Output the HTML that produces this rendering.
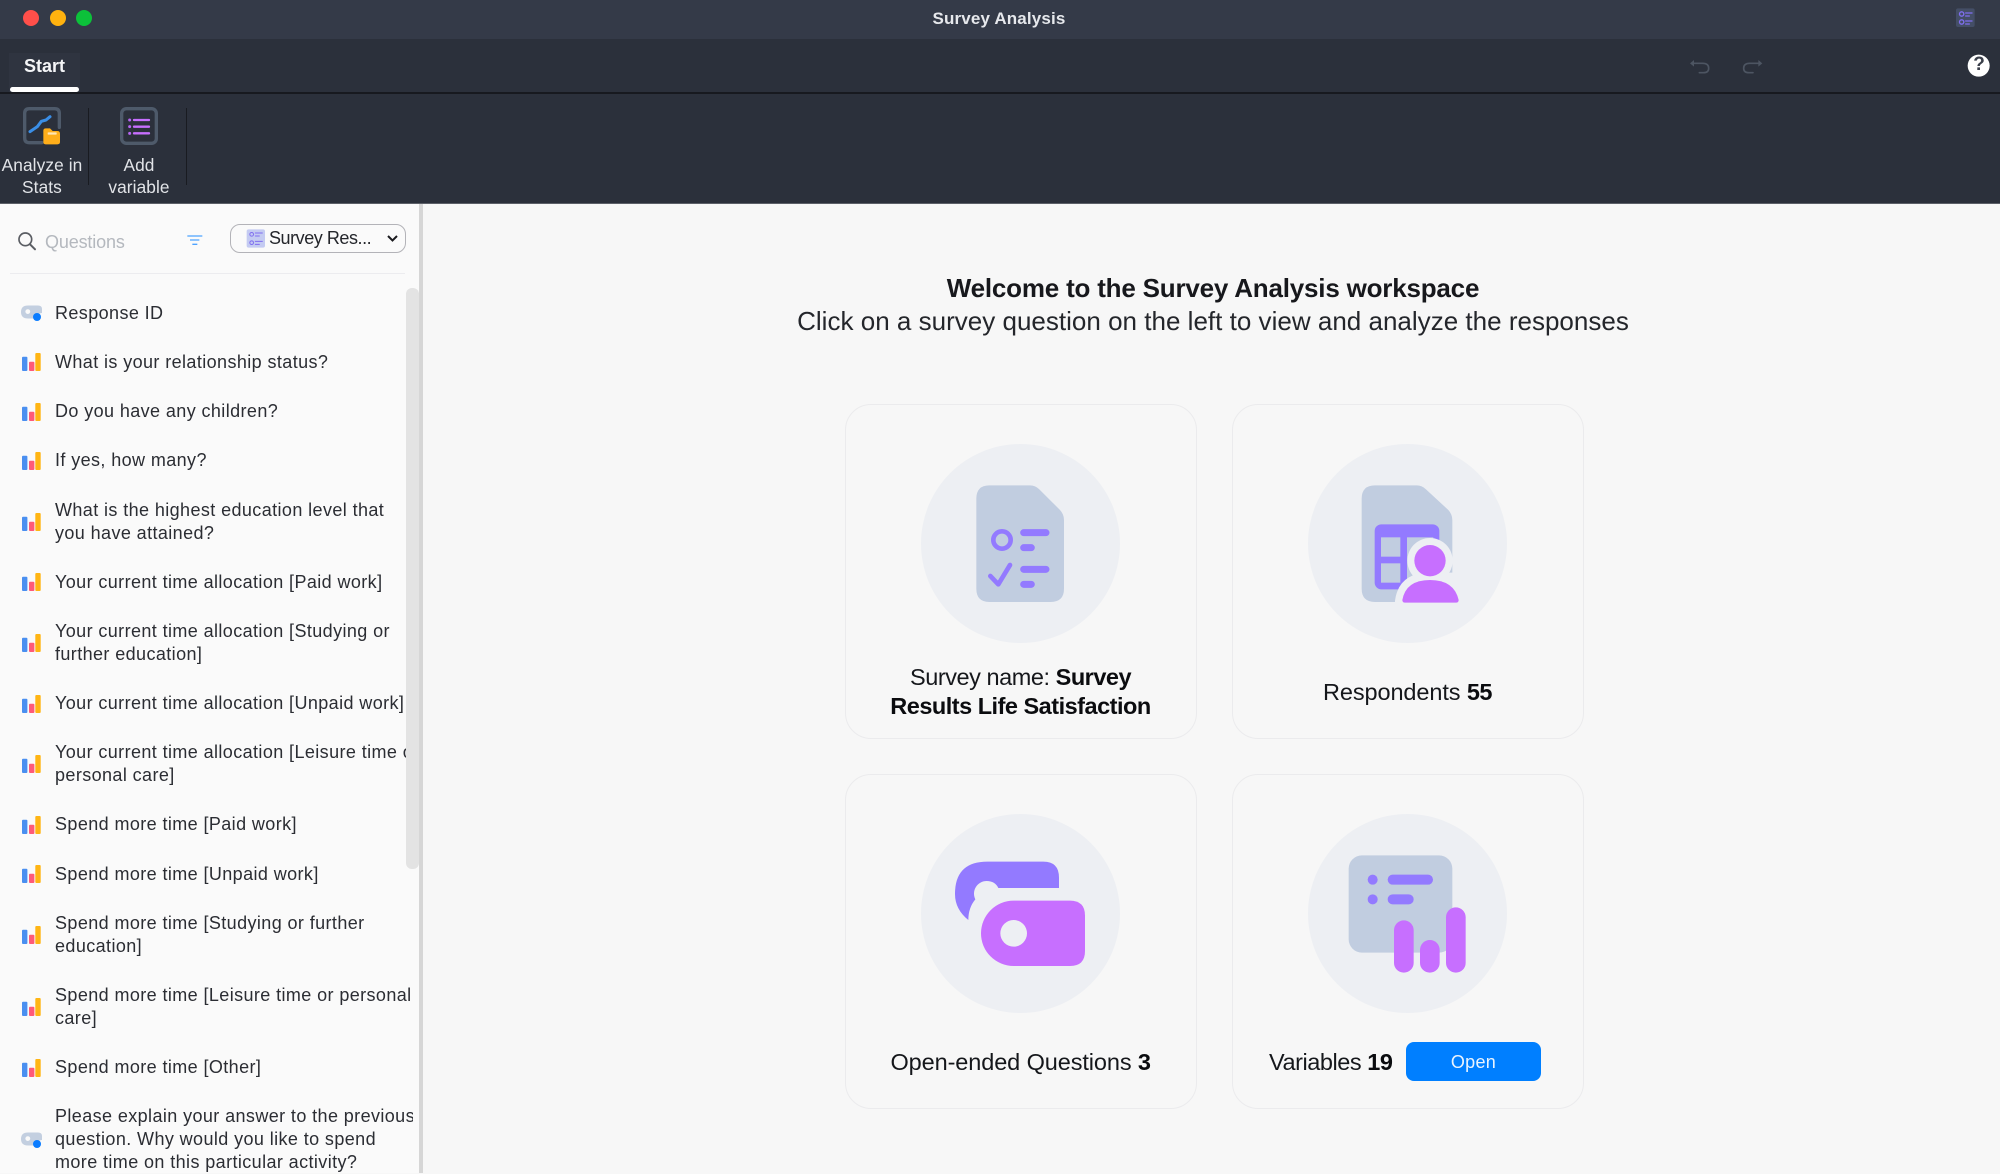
<!DOCTYPE html>
<html lang="en">
<head>
<meta charset="utf-8">
<title>Survey Analysis</title>
<style>
html,body{margin:0;padding:0;width:2000px;height:1173px;overflow:hidden;background:#f7f7f7;font-family:"Liberation Sans",sans-serif}
.a{position:absolute}
svg{position:absolute;overflow:visible}
#side{left:0;top:204px;width:419px;height:969px;background:#fafafa}
#list{left:0;top:288.7px;width:413px;height:885px;overflow:hidden}
.it{display:flex;align-items:center;position:relative;padding:13.1px 0 13.1px 55px;font-size:18px;line-height:23px;letter-spacing:.4px;color:#2b2d33;white-space:nowrap}
.it svg{left:22px;top:50%;margin-top:-9px}
.it svg.p{left:20.5px}
.lbl{font-size:23.5px;line-height:29px;color:#15171b;text-align:center;white-space:nowrap;letter-spacing:-.1px}
.lbl b{color:#0b0c0f;letter-spacing:-.5px}
.card{width:352px;height:335px;border:1.5px solid #ebebed;border-radius:26px;box-sizing:border-box}
.circ{width:199px;height:199px;border-radius:50%;background:#edeff3}
.tb{font-size:17.3px;line-height:21.5px;color:#e2e4e8;text-align:center;white-space:nowrap;letter-spacing:.1px}
</style>
</head>
<body>
<!-- title bar -->
<div class="a" style="left:0;top:0;width:2000px;height:39px;background:#343a48"></div>
<div class="a" style="left:0;top:39px;width:2000px;height:164px;background:#2b303b"></div>
<div class="a" style="left:0;top:92px;width:2000px;height:2px;background:#17191f"></div>
<div class="a" style="left:0;top:203px;width:2000px;height:1px;background:#5c6068"></div>
<div class="a" style="left:23px;top:10px;width:16px;height:16px;border-radius:50%;background:#ff4f4a"></div>
<div class="a" style="left:50px;top:10px;width:16px;height:16px;border-radius:50%;background:#ffb20f"></div>
<div class="a" style="left:76px;top:10px;width:16px;height:16px;border-radius:50%;background:#0cc13a"></div>
<div class="a" style="left:799px;top:9px;width:400px;text-align:center;font-size:17px;line-height:20px;font-weight:bold;color:#e6e8ec;letter-spacing:.15px">Survey Analysis</div>

<!-- tab -->
<div class="a" style="left:9px;top:53px;width:71px;height:39px;background:#2f3440"></div>
<div class="a" style="left:9px;top:55px;width:71px;text-align:center;font-size:18px;line-height:22px;font-weight:bold;color:#f4f5f7">Start</div>
<div class="a" style="left:10px;top:87px;width:69px;height:5px;border-radius:3px;background:#fff"></div>

<!-- toolbar separators -->
<div class="a" style="left:87.5px;top:108px;width:1.5px;height:77px;background:#191b21"></div>
<div class="a" style="left:185.5px;top:108px;width:1.5px;height:77px;background:#191b21"></div>

<!-- sidebar base -->
<div class="a" id="side"></div>
<div class="a" style="left:419px;top:204px;width:4px;height:969px;background:#d6d6d6"></div>

<!-- toolbar icons + search row, in 3x coords -->
<svg style="left:0;top:0" width="430" height="290" viewBox="0 0 1290 870" fill="none">
  <path d="M126 428H88Q74 428 74 414V340Q74 326 88 326H164Q178 326 178 340V382" stroke="#4e5a6a" stroke-width="10" stroke-linecap="round"/>
  <path d="M90 395L112 380L124 364L138 360L150 350" stroke="#3a8ee6" stroke-width="9" stroke-linejoin="round" stroke-linecap="round"/>
  <path d="M130 392Q130 385 137 385H150L158 393H172Q180 393 180 401V426Q180 433 172 433H137Q130 433 130 426Z" fill="#ffae1a"/>
  <rect x="143" y="397" width="27" height="7" rx="2" fill="#ffe6b5"/>
  <rect x="365" y="326" width="104" height="104" rx="14" stroke="#4e5a6a" stroke-width="10"/>
  <circle cx="389" cy="360" r="4.5" fill="#b866f5"/><circle cx="389" cy="380" r="4.5" fill="#b866f5"/><circle cx="389" cy="400" r="4.5" fill="#b866f5"/>
  <path d="M402 360H447M402 380H447M402 400H447" stroke="#c76fff" stroke-width="7" stroke-linecap="round"/>
  <circle cx="76" cy="718" r="19" stroke="#5a5d63" stroke-width="5"/>
  <path d="M90 733L105 748" stroke="#5a5d63" stroke-width="6" stroke-linecap="round"/>
  <path d="M562 708H607M570 720H598M577 733H592" stroke="#4da3ff" stroke-width="4"/>
</svg>
<div class="a tb" style="left:-8px;top:155px;width:100px">Analyze in<br>Stats</div>
<div class="a tb" style="left:89px;top:155px;width:100px">Add<br>variable</div>

<!-- top right -->
<svg style="left:1640px;top:0" width="360" height="100" viewBox="0 0 1080 300" fill="none">
  <rect x="948" y="25" width="56" height="56" rx="6" fill="#444e66"/>
  <circle cx="965" cy="42" r="6.5" stroke="#7f6ef0" stroke-width="4"/><circle cx="965" cy="66" r="6.5" stroke="#7f6ef0" stroke-width="4"/>
  <path d="M977 39H996M977 48H988M977 63H996M977 72H988" stroke="#7f6ef0" stroke-width="4" stroke-linecap="round"/>
  <path d="M160 190H188Q206 190 206 205Q206 218 190 218H178" stroke="#4d5562" stroke-width="5" stroke-linecap="round"/>
  <path d="M150 190L162 180V200Z" fill="#4d5562"/>
  <path d="M357 190H329Q311 190 311 205Q311 218 327 218H339" stroke="#4d5562" stroke-width="5" stroke-linecap="round"/>
  <path d="M367 190L355 180V200Z" fill="#4d5562"/>
  <circle cx="1016" cy="197" r="33" fill="#fff"/>
</svg>
<div class="a" style="left:1969px;top:54px;width:20px;text-align:center;font-size:19px;line-height:22px;font-weight:bold;color:#3a3f4a">?</div>

<!-- sidebar header -->
<div class="a" style="left:45px;top:230.5px;font-size:18px;line-height:22px;color:#b4b8be;letter-spacing:-.15px">Questions</div>
<div class="a" style="left:229.5px;top:224px;width:176.5px;height:29px;border:1.5px solid #b3b3b8;border-radius:10px;box-sizing:border-box"></div>
<svg style="left:230px;top:215px" width="100" height="45" viewBox="0 0 300 135" fill="none">
  <rect x="50" y="43" width="55" height="55" rx="6" fill="#c4cbf2"/>
  <circle cx="65" cy="58" r="5.5" stroke="#7f6ef0" stroke-width="3"/><circle cx="65" cy="83" r="5.5" stroke="#7f6ef0" stroke-width="3"/>
  <path d="M76 54H97M76 63H88M76 79H97M76 88H88" stroke="#7f6ef0" stroke-width="3" stroke-linecap="round"/>
</svg>
<div class="a" style="left:269px;top:227px;font-size:18px;line-height:22px;color:#24262b;letter-spacing:-.45px;white-space:nowrap">Survey Res...</div>
<svg style="left:386px;top:234px" width="13" height="9" viewBox="0 0 13 9" fill="none"><path d="M2 2L6.5 6.5L11 2" stroke="#1a1a1e" stroke-width="2"/></svg>
<div class="a" style="left:10px;top:273px;width:395px;height:1px;background:#ececef"></div>

<svg width="0" height="0" style="position:absolute"><defs>
<symbol id="bar" viewBox="0 0 20 18"><rect x="0" y="3.7" width="5.4" height="14.3" rx="1" fill="#4a8ff0"/><rect x="7" y="8.7" width="5.4" height="9.3" rx="1" fill="#ff5a78"/><rect x="13.3" y="0" width="5.4" height="18" rx="1" fill="#ffb514"/></symbol>
<symbol id="pill" viewBox="0 0 21 18"><path d="M7 1.5H17Q21 1.5 21 5V9Q19 9 17 10.5L16 14.5H7Q0 14.5 0 8Q0 1.5 7 1.5Z" fill="#c3cfe0"/><circle cx="6.8" cy="7.6" r="2.4" fill="#fafafa"/><circle cx="16" cy="13" r="4" fill="#0a7cff"/></symbol>
</defs></svg>

<div class="a" id="list">
<div class="it"><svg class="p" width="21" height="18"><use href="#pill"/></svg>Response ID</div>
<div class="it"><svg width="20" height="18"><use href="#bar"/></svg>What is your relationship status?</div>
<div class="it"><svg width="20" height="18"><use href="#bar"/></svg>Do you have any children?</div>
<div class="it"><svg width="20" height="18"><use href="#bar"/></svg>If yes, how many?</div>
<div class="it"><svg width="20" height="18"><use href="#bar"/></svg><span>What is the highest education level that<br>you have attained?</span></div>
<div class="it"><svg width="20" height="18"><use href="#bar"/></svg>Your current time allocation [Paid work]</div>
<div class="it"><svg width="20" height="18"><use href="#bar"/></svg><span>Your current time allocation [Studying or<br>further education]</span></div>
<div class="it"><svg width="20" height="18"><use href="#bar"/></svg>Your current time allocation [Unpaid work]</div>
<div class="it"><svg width="20" height="18"><use href="#bar"/></svg><span>Your current time allocation [Leisure time or<br>personal care]</span></div>
<div class="it"><svg width="20" height="18"><use href="#bar"/></svg>Spend more time [Paid work]</div>
<div class="it"><svg width="20" height="18"><use href="#bar"/></svg>Spend more time [Unpaid work]</div>
<div class="it"><svg width="20" height="18"><use href="#bar"/></svg><span>Spend more time [Studying or further<br>education]</span></div>
<div class="it"><svg width="20" height="18"><use href="#bar"/></svg><span>Spend more time [Leisure time or personal<br>care]</span></div>
<div class="it"><svg width="20" height="18"><use href="#bar"/></svg>Spend more time [Other]</div>
<div class="it"><svg class="p" width="21" height="18"><use href="#pill"/></svg><span>Please explain your answer to the previous<br>question. Why would you like to spend<br>more time on this particular activity?</span></div>
</div>
<div class="a" style="left:406px;top:288px;width:13px;height:581px;border-radius:6px 6px 6px 6px;background:#e3e3e3"></div>

<!-- main heading -->
<div class="a" style="left:613px;top:273px;width:1200px;text-align:center;font-size:26px;line-height:30px;font-weight:bold;color:#17181c;letter-spacing:-.2px">Welcome to the Survey Analysis workspace</div>
<div class="a" style="left:613px;top:306px;width:1200px;text-align:center;font-size:26px;line-height:30px;color:#24262b;letter-spacing:.01px">Click on a survey question on the left to view and analyze the responses</div>

<!-- cards -->
<div class="a card" style="left:845px;top:404px"></div>
<div class="a card" style="left:1232px;top:404px"></div>
<div class="a card" style="left:845px;top:774px"></div>
<div class="a card" style="left:1232px;top:774px"></div>
<div class="a circ" style="left:921px;top:444px"></div>
<div class="a circ" style="left:1308px;top:444px"></div>
<div class="a circ" style="left:921px;top:814px"></div>
<div class="a circ" style="left:1308px;top:814px"></div>

<!-- card 1 icon -->
<svg style="left:830px;top:395.5px" width="390" height="350" viewBox="0 0 1170 1050" fill="none">
  <path d="M478 268H600Q616 268 628 280L690 342Q702 355 702 372V578Q702 618 662 618H478Q439 618 439 578V308Q439 268 478 268Z" fill="#c1cde0"/>
  <circle cx="516" cy="432" r="26" stroke="#937aff" stroke-width="14"/>
  <path d="M581 410H648M581 520H648" stroke="#937aff" stroke-width="21" stroke-linecap="round"/>
  <path d="M581 455H604M581 565H604" stroke="#937aff" stroke-width="21" stroke-linecap="round"/>
  <path d="M481 540L505 565L540 507" stroke="#937aff" stroke-width="14" stroke-linecap="round" stroke-linejoin="round"/>
</svg>
<!-- card 2 icon -->
<svg style="left:1220px;top:395.5px" width="390" height="350" viewBox="0 0 1170 1050" fill="none">
  <path d="M465 268H590Q606 268 618 280L685 342Q697 355 697 372V578Q697 618 657 618H465Q425 618 425 578V308Q425 268 465 268Z" fill="#c1cde0"/>
  <rect x="464" y="385" width="194" height="195" rx="20" fill="#937aff"/>
  <rect x="483" y="424" width="58" height="58" fill="#c1cde0"/>
  <rect x="483" y="502" width="58" height="58" fill="#c1cde0"/>
  <rect x="561" y="424" width="79" height="136" fill="#c1cde0"/>
  <circle cx="630" cy="494" r="68" fill="#edeff3"/>
  <path d="M524 625Q530 530 630 530H730V625Z" fill="#edeff3"/>
  <circle cx="630" cy="494" r="47" fill="#c76fff"/>
  <path d="M547 612Q558 552 630 552Q702 552 716 612Q716 620 708 620H555Q547 620 547 612Z" fill="#c76fff"/>
</svg>
<!-- card 3 icon -->
<svg style="left:830px;top:765.5px" width="390" height="350" viewBox="0 0 1170 1050" fill="none">
  <path d="M687 366H505Q495 345 470 345A38 38 0 0 0 436 400Q415 425 415 462Q375 430 375 384Q375 287 472 287H640Q687 287 687 335Z" fill="#937aff"/>
  <path d="M551 404H720Q765 404 765 449V555Q765 600 720 600H551A98 98 0 0 1 551 404Z" fill="#c76fff"/>
  <circle cx="551" cy="502" r="40" fill="#edeff3"/>
</svg>
<!-- card 4 icon -->
<svg style="left:1220px;top:765.5px" width="390" height="350" viewBox="0 0 1170 1050" fill="none">
  <rect x="386" y="268" width="311" height="292" rx="40" fill="#c1cde0"/>
  <circle cx="458" cy="341" r="15" fill="#937aff"/><circle cx="458" cy="400" r="15" fill="#937aff"/>
  <rect x="503" y="326" width="136" height="30" rx="15" fill="#937aff"/>
  <rect x="503" y="385" width="78" height="30" rx="15" fill="#937aff"/>
  <rect x="522" y="463" width="59" height="157" rx="29.5" fill="#c76fff"/>
  <rect x="600" y="522" width="59" height="98" rx="29.5" fill="#c76fff"/>
  <rect x="678" y="424" width="59" height="196" rx="29.5" fill="#c76fff"/>
</svg>

<!-- card labels -->
<div class="a lbl" style="left:845px;top:663px;width:351px;letter-spacing:-.45px">Survey name: <b>Survey</b><br><b>Results Life Satisfaction</b></div>
<div class="a lbl" style="left:1232px;top:678px;width:351px">Respondents <b>55</b></div>
<div class="a lbl" style="left:845px;top:1048px;width:351px">Open-ended Questions <b>3</b></div>
<div class="a lbl" style="left:1269px;top:1048px;letter-spacing:-.45px">Variables <b>19</b></div>
<div class="a" style="left:1406px;top:1042px;width:135px;height:39px;border-radius:8px;background:#007fff;color:#eaf4ff;text-align:center;font-size:18px;line-height:41px;letter-spacing:.3px">Open</div>
</body>
</html>
